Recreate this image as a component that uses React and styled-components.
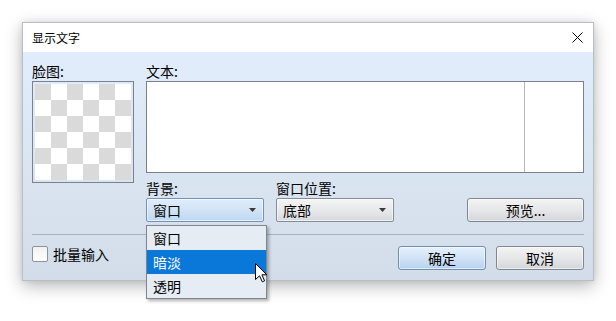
import React from 'react';
import styled, { createGlobalStyle } from 'styled-components';

const GlobalStyle = createGlobalStyle`
  html, body {
    margin: 0;
    padding: 0;
    background: #fff;
  }
  body {
    font-family: "Noto Sans CJK SC", "Noto Sans", sans-serif;
    font-size: 14px;
    color: #000;
  }
`;

const Page = styled.div`
  width: 616px;
  height: 321px;
  padding: 22px 0 0 22px;
  box-sizing: border-box;
  overflow: hidden;
`;

const Window = styled.div`
  width: 572px;
  height: 259px;
  box-sizing: border-box;
  border: 1px solid #b8bec6;
  box-shadow: 0 5px 16px rgba(0, 0, 0, 0.28), 0 0 6px rgba(0, 0, 0, 0.08);
  display: flex;
  flex-direction: column;
`;

const TitleBar = styled.div`
  height: 29px;
  flex: none;
  background: #fff;
  display: flex;
  align-items: center;
  justify-content: space-between;
  padding-left: 9px;
`;

const Title = styled.span`
  font-size: 12px;
  line-height: 16px;
`;

const CloseButton = styled.div`
  width: 32px;
  height: 29px;
  display: flex;
  align-items: center;
  justify-content: center;
`;

const Body = styled.div`
  flex: 1;
  background: linear-gradient(to bottom, #e1edfc 0%, #dbe6f3 45%, #d3dde9 100%);
  padding: 10px 9px 9px 9px;
  display: flex;
  flex-direction: column;
`;

const TopSection = styled.div`
  display: flex;
  gap: 12px;
`;

const Column = styled.div`
  display: flex;
  flex-direction: column;
  width: ${(p) => p.$width};
`;

const Label = styled.div`
  line-height: 19px;
  height: 19px;
  white-space: nowrap;
`;

const FaceBox = styled.div`
  width: 96px;
  height: 96px;
  padding: 2px;
  background-color: #fff;
  background-image: repeating-conic-gradient(#fff 0 25%, #dadada 0 50%);
  background-size: 32px 32px;
  background-origin: content-box;
  background-clip: content-box;
  border: 1px solid #7c828b;
  outline: none;
`;

const FaceFrame = styled.div`
  background: #fff;
  width: 102px;
`;

const TextBox = styled.div`
  height: 92px;
  box-sizing: border-box;
  border: 1px solid #7a8089;
  background: #fff;
  display: flex;
`;

const TextInput = styled.div`
  flex: 1;
`;

const MarginArea = styled.div`
  width: 58px;
  border-left: 1px solid #b6b6b6;
`;

const ControlsRow = styled.div`
  display: flex;
  align-items: flex-end;
  gap: 12px;
  margin-top: 6px;
`;

const Field = styled.div`
  position: relative;
  display: flex;
  flex-direction: column;
`;

const Combo = styled.div`
  width: ${(p) => p.$width}px;
  height: 24px;
  box-sizing: border-box;
  border: 1px solid ${(p) => (p.$open ? '#6f93bb' : '#868c94')};
  border-radius: 2px;
  background: ${(p) =>
    p.$open
      ? 'linear-gradient(to bottom, #e0ecf9 0%, #d2e4f6 50%, #bed7f0 100%)'
      : 'linear-gradient(to bottom, #f4f4f4 0%, #e8e9eb 50%, #d6d9dd 100%)'};
  box-shadow: inset 0 0 0 1px rgba(255, 255, 255, 0.6);
  display: flex;
  align-items: center;
  justify-content: space-between;
  padding: 0 7px 0 6px;
  line-height: 22px;
`;

const Arrow = () => (
  <svg width="7" height="4" viewBox="0 0 7 4">
    <polygon points="0,0 7,0 3.5,4" fill="#3a3a3a" />
  </svg>
);

const Spacer = styled.div`
  flex: 1;
`;

const Button = styled.div`
  width: ${(p) => p.$width}px;
  height: 24px;
  box-sizing: border-box;
  border: 1px solid ${(p) => (p.$primary ? '#6e8fb4' : '#80868e')};
  border-radius: 3px;
  background: ${(p) =>
    p.$primary
      ? 'linear-gradient(to bottom, #e6f0fb 0%, #d1e3f6 50%, #b7d1ec 100%)'
      : 'linear-gradient(to bottom, #f3f3f3 0%, #e6e7e9 50%, #d3d6da 100%)'};
  box-shadow: inset 0 0 0 1px rgba(255, 255, 255, 0.55);
  display: flex;
  align-items: center;
  justify-content: center;
  line-height: 22px;
`;

const Separator = styled.div`
  height: 1px;
  background: #a9b0b8;
  margin: 12px 0 11px;
`;

const BottomRow = styled.div`
  display: flex;
  align-items: flex-start;
`;

const CheckRow = styled.label`
  display: flex;
  align-items: center;
  gap: 5px;
  height: 16px;
  line-height: 16px;
`;

const CheckBox = styled.span`
  width: 16px;
  height: 16px;
  box-sizing: border-box;
  border: 1px solid #8d939a;
  border-radius: 2px;
  background: linear-gradient(to bottom, #f1f1f1, #ffffff);
`;

const ButtonGroup = styled.div`
  display: flex;
  gap: 10px;
`;

const DropList = styled.div`
  position: absolute;
  top: 46px;
  left: 0;
  width: 121px;
  box-sizing: border-box;
  border: 1px solid #80868e;
  background: #e6ecf4;
  box-shadow: 2px 2px 3px rgba(0, 0, 0, 0.3);
  z-index: 2;
`;

const DropItem = styled.div`
  height: 24px;
  line-height: 24px;
  padding-left: 6px;
  background: ${(p) => (p.$active ? '#0a78d8' : 'transparent')};
  color: ${(p) => (p.$active ? '#fff' : '#000')};
`;

const Cursor = styled.svg`
  position: absolute;
  left: 108px;
  top: 37px;
  z-index: 3;
`;

const backgrounds = ['窗口', '暗淡', '透明'];

export default function App() {
  return (
    <>
      <GlobalStyle />
      <Page>
        <Window>
          <TitleBar>
            <Title>显示文字</Title>
            <CloseButton>
              <svg width="11" height="11" viewBox="0 0 11 11">
                <path d="M0.5 0.5 L10.5 10.5 M10.5 0.5 L0.5 10.5" stroke="#000" strokeWidth="1" />
              </svg>
            </CloseButton>
          </TitleBar>
          <Body>
            <TopSection>
              <Column $width="102px">
                <Label>脸图:</Label>
                <FaceBox />
              </Column>
              <Column $width="438px">
                <Label>文本:</Label>
                <TextBox>
                  <TextInput />
                  <MarginArea />
                </TextBox>
                <ControlsRow>
                  <Field>
                    <Label>背景:</Label>
                    <Combo $width={118} $open>
                      <span>窗口</span>
                      <Arrow />
                    </Combo>
                    <DropList>
                      {backgrounds.map((b) => (
                        <DropItem key={b} $active={b === '暗淡'}>
                          {b}
                        </DropItem>
                      ))}
                      <Cursor width="13" height="20" viewBox="0 0 13 20">
                        <path
                          d="M0.5 0.5 L0.5 16.5 L4.5 12.8 L7.3 18.8 L9.6 17.8 L6.9 11.8 L11.8 11.8 Z"
                          fill="#fff"
                          stroke="#000"
                          strokeWidth="1"
                          strokeLinejoin="miter"
                        />
                      </Cursor>
                    </DropList>
                  </Field>
                  <Field>
                    <Label>窗口位置:</Label>
                    <Combo $width={118}>
                      <span>底部</span>
                      <Arrow />
                    </Combo>
                  </Field>
                  <Spacer />
                  <Button $width={117}>预览...</Button>
                </ControlsRow>
              </Column>
            </TopSection>
            <Separator />
            <BottomRow>
              <CheckRow>
                <CheckBox />
                批量输入
              </CheckRow>
              <Spacer />
              <ButtonGroup>
                <Button $width={88} $primary>确定</Button>
                <Button $width={88}>取消</Button>
              </ButtonGroup>
            </BottomRow>
          </Body>
        </Window>
      </Page>
    </>
  );
}
